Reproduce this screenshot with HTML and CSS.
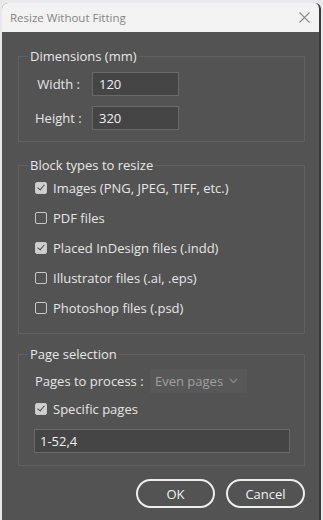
FILE: index.html
```html
<!DOCTYPE html>
<html lang="en">
<head>
    <meta charset="UTF-8">
    <meta name="viewport" content="width=device-width, initial-scale=1.0">
    <title>Resize Without Fitting</title>
    <link rel="stylesheet" href="styles.css">
</head>
<body>
    <div class="window">
        <!-- Barra de título -->
        <div class="titlebar">
            <span class="title">Resize Without Fitting</span>
            <svg class="close" width="11" height="11" viewBox="0 0 11 11">
                <path d="M0.5 0.5 L10.5 10.5 M10.5 0.5 L0.5 10.5" stroke="#8c8c8c" stroke-width="1.1" fill="none"/>
            </svg>
        </div>

        <div class="content">
            <fieldset class="group dims">
                <legend>Dimensions (mm)</legend>
                <div class="dim-grid">
                    <label>Width :</label>
                    <div class="field">120</div>
                    <label>Height :</label>
                    <div class="field">320</div>
                </div>
            </fieldset>

            <fieldset class="group blocks">
                <legend>Block types to resize</legend>
                <div class="check-row"><span class="box checked"></span>Images (PNG, JPEG, TIFF, etc.)</div>
                <div class="check-row"><span class="box"></span>PDF files</div>
                <div class="check-row"><span class="box checked"></span>Placed InDesign files (.indd)</div>
                <div class="check-row"><span class="box"></span>Illustrator files (.ai, .eps)</div>
                <div class="check-row"><span class="box"></span>Photoshop files (.psd)</div>
            </fieldset>

            <fieldset class="group pages">
                <legend>Page selection</legend>
                <div class="process-row">
                    <span class="process-label">Pages to process :</span>
                    <div class="select">
                        <span>Even pages</span>
                        <svg width="9" height="6" viewBox="0 0 9 6">
                            <path d="M1 1 L4.5 4.5 L8 1" stroke="#8a8a8a" stroke-width="1.2" fill="none"/>
                        </svg>
                    </div>
                </div>
                <div class="check-row specific"><span class="box checked"></span>Specific pages</div>
                <div class="field wide">1-52,4</div>
            </fieldset>

            <div class="buttons">
                <button>OK</button>
                <button>Cancel</button>
            </div>
        </div>
    </div>
</body>
</html>
```

FILE: styles.css
```css
/* Fondo detrás de la ventana */
body {
    margin: 0;
    background-color: #e9e9ec;
    font-family: "Open Sans", "Noto Sans", sans-serif;
    font-size: 13px;
    color: #e6e6e6;
}

/* Ventana del diálogo */
.window {
    margin: 3px 2px 0 2px;
    height: 517px;
    background-color: #535353;
    border-radius: 6px 6px 0 0;
    overflow: hidden;
    border-right: 2px solid #3a3a3a;
}

.titlebar {
    height: 29px;
    background-color: #f3f3f3;
    display: flex;
    align-items: center;
    justify-content: space-between;
    padding: 0 9px 0 8px;
}

.title {
    color: #858585;
    font-size: 11.5px;
}

.close {
    display: block;
}

/* Contenido */
.content {
    padding: 16px 14px 0 16px;
}

.group {
    margin: 0;
    border: 1px solid #606060;
    padding: 0 14px 11px 16px;
}

.group legend {
    padding: 0 2px;
    margin-left: -7px;
    line-height: 16px;
    color: #e8e8e8;
}

.dims {
    padding-top: 8px;
}

.dim-grid {
    display: grid;
    grid-template-columns: 45px 87px;
    column-gap: 12px;
    row-gap: 10px;
    align-items: center;
}

.dim-grid label {
    text-align: right;
    white-space: nowrap;
}

.field {
    height: 22px;
    line-height: 22px;
    background-color: #454545;
    border: 1px solid #6a6a6a;
    padding: 0 6px;
    color: #f0f0f0;
}

.blocks {
    margin-top: 15px;
    padding-bottom: 10px;
}

.check-row {
    display: flex;
    align-items: center;
    gap: 6px;
    height: 30px;
}

.box {
    width: 10px;
    height: 10px;
    border: 1px solid #c8c8c8;
    border-radius: 2px;
    flex-shrink: 0;
}

.box.checked {
    background-color: #cfcfcf;
    position: relative;
}

.box.checked::after {
    content: "";
    position: absolute;
    left: 3px;
    top: 0px;
    width: 3px;
    height: 6px;
    border-right: 1.5px solid #4a4a4a;
    border-bottom: 1.5px solid #4a4a4a;
    transform: rotate(40deg);
}

.pages {
    margin-top: 12px;
    padding-top: 7px;
    padding-bottom: 12px;
}

.process-row {
    display: flex;
    align-items: center;
    height: 24px;
}

.process-label {
    width: 115px;
    white-space: nowrap;
}

.select {
    width: 97px;
    height: 24px;
    background-color: #585858;
    display: flex;
    align-items: center;
    justify-content: space-between;
    padding: 0 9px 0 5px;
    box-sizing: border-box;
    color: #a0a0a0;
}

.specific {
    margin-top: 6px;
    height: 20px;
}

.field.wide {
    margin-top: 10px;
    margin-left: -1px;
    padding-left: 5px;
}

/* Botones */
.buttons {
    display: flex;
    justify-content: flex-end;
    gap: 11px;
    margin-top: 13px;
}

button {
    width: 79px;
    height: 29px;
    background-color: transparent;
    border: 2px solid #ededed;
    border-radius: 15px;
    color: #f2f2f2;
    font-family: "Open Sans", "Noto Sans", sans-serif;
    font-size: 13px;
}
```
